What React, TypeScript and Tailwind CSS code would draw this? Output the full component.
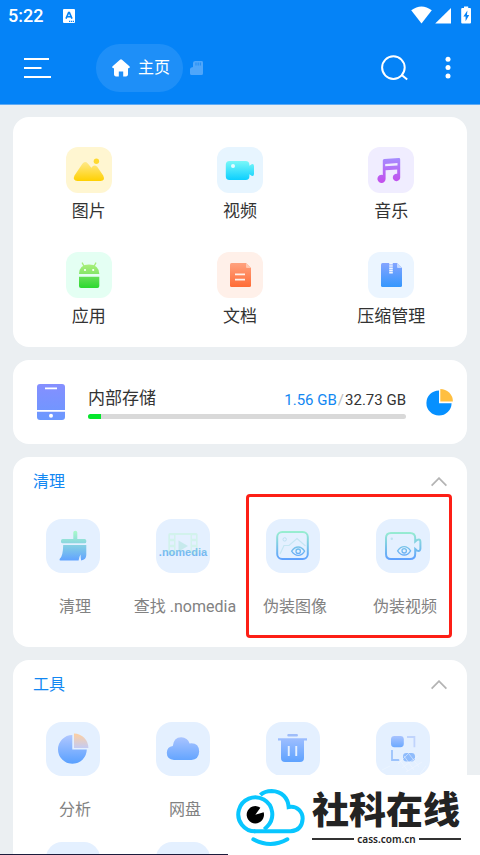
import type { ReactNode } from 'react';

const mediaItems = [
  { name: '图片', bg: 'bg-[#fff6d1]', icon: <PictureIcon /> },
  { name: '视频', bg: 'bg-[#e7f5ff]', icon: <VideoIcon /> },
  { name: '音乐', bg: 'bg-[#f0edff]', icon: <MusicIcon /> },
  { name: '应用', bg: 'bg-[#e4fff3]', icon: <AndroidIcon /> },
  { name: '文档', bg: 'bg-[#fff0e9]', icon: <DocumentIcon /> },
  { name: '压缩管理', bg: 'bg-[#ebf5ff]', icon: <ZipIcon /> },
];

const cleanItems = [
  { name: '清理', icon: <BrushIcon /> },
  { name: '查找 .nomedia', icon: <NomediaIcon /> },
  { name: '伪装图像', icon: <HiddenImageIcon /> },
  { name: '伪装视频', icon: <HiddenVideoIcon /> },
];

const toolItems = [
  { name: '分析', icon: <AnalyzeIcon /> },
  { name: '网盘', icon: <CloudIcon /> },
  { name: '', icon: <TrashIcon /> },
  { name: '', icon: <QrIcon /> },
  { name: '', icon: null },
  { name: '', icon: null },
];

function Gradient({ id, from, to }: { id: string; from: string; to: string }) {
  return (
    <defs>
      <linearGradient id={id} x1="0" y1="0" x2="0" y2="1">
        <stop offset="0" stopColor={from} />
        <stop offset="1" stopColor={to} />
      </linearGradient>
    </defs>
  );
}

// Strokes share one vertical gradient over the whole 54px tile
function TileGradient({ id, from, to }: { id: string; from: string; to: string }) {
  return (
    <defs>
      <linearGradient id={id} gradientUnits="userSpaceOnUse" x1="0" y1="12" x2="0" y2="41">
        <stop offset="0" stopColor={from} />
        <stop offset="1" stopColor={to} />
      </linearGradient>
    </defs>
  );
}

function PictureIcon() {
  return (
    <svg viewBox="0 0 46 46" className="size-full">
      <Gradient id="pic" from="#ffe98a" to="#ffd000" />
      <circle cx="30.4" cy="14.3" r="2.7" fill="#ffd92e" />
      <path d="M8.5 28.6 16.4 16.7Q18.9 13.3 21.8 16.4L25.4 20.7Q28 16.9 31.2 19.8L37.2 28.6Q39.6 34 34.6 34H11.4Q6.2 33.6 8.5 28.6Z" fill="url(#pic)" />
    </svg>
  );
}

function VideoIcon() {
  return (
    <svg viewBox="0 0 46 46" className="size-full">
      <Gradient id="vid" from="#7af8f8" to="#0ccfff" />
      <path d="M12.4 14H28.6Q32.4 14 32.4 17.8V18.8L34.6 17.2Q37 16.6 37 19V27Q37 29.4 34.6 28.8L32.4 27.2V29.2Q32.4 33 28.6 33H12.4Q8.8 33 8.8 29.2V17.8Q8.8 14 12.4 14Z" fill="url(#vid)" />
      <circle cx="16" cy="19" r="2" fill="#e7fcff" />
    </svg>
  );
}

function MusicIcon() {
  return (
    <svg viewBox="0 0 46 46" className="size-full">
      <Gradient id="mus" from="#a58dff" to="#c44dec" />
      <path fillRule="evenodd" d="M14.8 13.6Q14.8 12.2 16.3 12.1L30.8 11.1Q32.2 11 32.2 12.4V30.4A3.7 3.7 0 1 1 29.2 26.8V22.5L17.6 23.2V31.5A4.1 4.1 0 1 1 14.8 27.9ZM17.2 16.9V19.2L29.5 18.4V16.1Z" fill="url(#mus)" />
    </svg>
  );
}

function AndroidIcon() {
  return (
    <svg viewBox="0 0 46 46" className="size-full">
      <Gradient id="and" from="#66df57" to="#2bd92f" />
      <Gradient id="andHead" from="#a9ef7b" to="#85e668" />
      <path d="M16.3 11 18.4 15M29.8 11 27.7 15" stroke="#a6ee79" strokeWidth="1.4" strokeLinecap="round" />
      <path d="M13 22Q13 12.4 23 12.4T33.3 22Z" fill="url(#andHead)" />
      <path d="M13 24.7H33.3V34Q33.3 36 31.3 36H15Q13 36 13 34Z" fill="url(#and)" />
      <circle cx="19" cy="18" r="1.1" fill="#fff" />
      <circle cx="27.2" cy="18" r="1.1" fill="#fff" />
    </svg>
  );
}

function DocumentIcon() {
  return (
    <svg viewBox="0 0 46 46" className="size-full">
      <Gradient id="doc" from="#ffa27f" to="#ff6c36" />
      <path d="M14.5 11H29L34 16V33.5Q34 35 32.5 35H14.5Q13 35 13 33.5V12.5Q13 11 14.5 11Z" fill="url(#doc)" />
      <path d="M29 11 34 16H30Q29 16 29 15Z" fill="#ffc7b0" />
      <path d="M18 22.4H28M18 27.6H28" stroke="#fff0e9" strokeWidth="1.6" />
    </svg>
  );
}

function ZipIcon() {
  return (
    <svg viewBox="0 0 46 46" className="size-full">
      <Gradient id="zip" from="#84a4ff" to="#3597fd" />
      <path d="M14.5 11H29L34 16V33.5Q34 35 32.5 35H14.5Q13 35 13 33.5V12.5Q13 11 14.5 11Z" fill="url(#zip)" />
      <path d="M29 11 34 16H30Q29 16 29 15Z" fill="#c2d7ff" />
      <path d="M22.2 11V22M23.8 11V22" stroke="#f1f6ff" strokeWidth="2" strokeDasharray="1.6 .6" />
    </svg>
  );
}

function BrushIcon() {
  return (
    <svg viewBox="0 0 54 54" className="size-full">
      <TileGradient id="brush" from="#a8fac8" to="#62a4ff" />
      <path d="M27.3 13.4Q27.3 11.7 29.3 11.7T31.3 13.4V20H38.6Q40.3 20 40.3 21.7V22.8Q40.3 24.3 38.6 24.3H16.7Q15 24.3 15 22.8V21.7Q15 20 16.7 20H27.3Z" fill="url(#brush)" />
      <path d="M17.2 26H40.3V36Q40.3 40.6 35.2 41.6Q34.6 39.6 34.6 35.5Q33.4 37 32.6 41.6H14.5Q13.2 41.5 13.6 40Q17 37.7 17.2 26Z" fill="url(#brush)" />
    </svg>
  );
}

function NomediaIcon() {
  return (
    <svg viewBox="0 0 54 54" className="size-full">
      <TileGradient id="nomedia" from="#a6f5cd" to="#6aa9fa" />
      <g opacity=".8">
        <path fillRule="evenodd" d="M14 14H40Q41.6 14 41.6 15.6V36H12.3V15.6Q12.3 14 14 14ZM19.5 16V36H34.5V16Z" fill="#cef3e8" />
        <path d="M14 18H18M14 24H18M14 30H18M36 18H40M36 24H40M36 30H40" stroke="#e4f0ff" strokeWidth="3.4" />
        <path d="M22.5 21.5 32 27 22.5 32.5Z" fill="#bfe8e8" />
      </g>
      <text x="27" y="37" textAnchor="middle" fontFamily="Liberation Sans, sans-serif" fontSize="11" fontWeight="700" fill="url(#nomedia)">.nomedia</text>
    </svg>
  );
}

function HiddenImageIcon() {
  return (
    <svg viewBox="0 0 54 54" className="size-full" fill="none">
      <TileGradient id="hideImg" from="#9af0cf" to="#5e9fff" />
      <circle cx="18.7" cy="20.4" r="1.7" stroke="#bfe0f3" strokeWidth="1" />
      <path d="M14 35 18 26.5H23L31 19.5 39.5 27" stroke="#c5e6f3" strokeWidth="1.2" />
      <rect x="11.2" y="13" width="30.6" height="27" rx="5" stroke="url(#hideImg)" strokeWidth="2" />
      <path d="M25.6 32.2Q28.4 28 32.2 28T38.6 32.2Q36 36.4 32.2 36.4T25.6 32.2Z" fill="#e4f0ff" stroke="url(#hideImg)" strokeWidth="1.3" />
      <circle cx="32.2" cy="32.2" r="2.2" stroke="url(#hideImg)" strokeWidth="1.3" />
    </svg>
  );
}

function HiddenVideoIcon() {
  return (
    <svg viewBox="0 0 54 54" className="size-full" fill="none">
      <TileGradient id="hideVid" from="#9af0cf" to="#5e9fff" />
      <circle cx="15.8" cy="19.8" r="1.2" fill="#bfe3f0" />
      <path d="M15 14H34Q39.2 14 39.2 19V22.5L41 21Q44.4 19.6 44.4 22.8V29.6Q44.4 32.8 41 31.6L39.2 30V35Q39.2 40 34 40H15Q10 40 10 35V19Q10 14 15 14Z" stroke="url(#hideVid)" strokeWidth="2" />
      <path d="M21.6 31.8Q24.4 27.6 28.2 27.6T34.6 31.8Q32 36 28.2 36T21.6 31.8Z" stroke="url(#hideVid)" strokeWidth="1.3" />
      <circle cx="28.2" cy="31.8" r="2.2" stroke="url(#hideVid)" strokeWidth="1.3" />
    </svg>
  );
}

function AnalyzeIcon() {
  return (
    <svg viewBox="0 0 54 54" className="size-full">
      <TileGradient id="pie" from="#b3c8ff" to="#5ba1ff" />
      <Gradient id="pieTop" from="#ffcf9f" to="#c4cbf3" />
      <path d="M26.3 13A14.4 14.4 0 1 0 40.8 27.6H26.3Z" fill="url(#pie)" />
      <path d="M28 11.4A14.6 14.6 0 0 1 42.4 26H28Z" fill="url(#pieTop)" />
    </svg>
  );
}

function CloudIcon() {
  return (
    <svg viewBox="0 0 54 54" className="size-full">
      <TileGradient id="cloud" from="#b3c8ff" to="#5ba1ff" />
      <path d="M18 38Q10.8 37.4 10.8 30.8Q11 24.6 16.8 24Q17.6 15.4 25.2 15.2Q31.6 15.4 33.6 21.4Q43 20.4 43.2 29.6Q42.8 37.6 35.4 38Z" fill="url(#cloud)" />
    </svg>
  );
}

function TrashIcon() {
  return (
    <svg viewBox="0 0 54 54" className="size-full">
      <TileGradient id="trash" from="#a9c3ff" to="#5ba1ff" />
      <rect x="21.3" y="12" width="10.6" height="2.4" rx="1" fill="#9fbdfa" />
      <path d="M12 16.2H41V18.4H38V36Q38 40 34 40H19Q15 40 15 36V18.4H12ZM21.8 24V34H23.7V24ZM29.3 24V34H31.2V24Z" fillRule="evenodd" fill="url(#trash)" />
    </svg>
  );
}

function QrIcon() {
  return (
    <svg viewBox="0 0 54 54" className="size-full" fill="none">
      <Gradient id="qrBlock" from="#a8c3ff" to="#6ca9ff" />
      <rect x="15" y="14" width="12.8" height="11.2" rx="3.4" fill="url(#qrBlock)" />
      <path d="M31 15H38.4V25.2" stroke="#c0d4fc" strokeWidth="1.8" />
      <path d="M16 28V38H23.4" stroke="#9cc3fc" strokeWidth="1.8" />
      <rect x="27" y="31" width="12" height="8.4" rx="3.4" fill="#8fbcfc" />
      <g stroke="#f3f8ff" strokeWidth="1" opacity=".5">
        <path d="M22 42 34 30M26 46 42 34M30 50 46 40M28 34 38 48M33 32 43 45M6 48 14 44M44 52 50 44M23 37 32 49" />
      </g>
    </svg>
  );
}

function StatusBar() {
  return (
    <div className="flex h-8 items-center px-2 text-white">
      <span className="text-lg font-medium">5:22</span>
      <svg viewBox="0 0 12 14" className="ml-5 h-[14px] w-3">
        <rect width="12" height="14" rx="1" fill="currentColor" />
        <path d="M3 9.6 5.6 3.6H6.4L9 9.6M4.1 7.8H7.9" fill="none" stroke="#0583f7" strokeWidth="1.6" />
        <path d="M6 12.3H11" stroke="#0583f7" strokeWidth="1.2" strokeDasharray="1.2 .7" />
      </svg>
      <svg viewBox="0 0 62 20" className="ml-auto h-5 w-[62px]" fill="currentColor">
        <path d="M1.2 4.2Q11.5 -3.4 21.8 4.2L11.5 17.5Z" />
        <path d="M41 2V17.6H25.2Z" />
        <path fillRule="evenodd" d="M54 .4H58.2V2H60Q61 2 61 3V16.6Q61 17.6 60 17.6H52.2Q51.2 17.6 51.2 16.6V3Q51.2 2 52.2 2H54ZM57.4 4.4 53.4 10.6H55.6V15.2L59.2 9H57Z" />
      </svg>
    </div>
  );
}

function Header() {
  return (
    <header className="border-b border-[#5fabf5] bg-[#0583f7]">
      <StatusBar />
      <div className="flex h-[72px] items-center pl-6 pr-5 text-white">
        <button aria-label="menu">
          <svg viewBox="0 0 27 22" className="h-[22px] w-[27px]" stroke="currentColor" strokeWidth="2">
            <path d="M0 2H25M0 11H17.5M0 20H27" />
          </svg>
        </button>
        <button className="ml-[45px] flex h-12 items-center gap-2 rounded-full bg-white/10 pl-4 pr-3">
          <svg viewBox="0 0 18 18" className="size-[18px]" fill="currentColor">
            <path d="M8 .7Q9 0 10 .7L17.4 7.2Q18.6 9 16.6 9.2H16V15.6Q16 17.4 14.2 17.4H11.2V12.4H6.8V17.4H3.8Q2 17.4 2 15.6V9.2H1.4Q-.6 9 .6 7.2Z" />
          </svg>
          <span className="w-[33px] text-left text-base">主页</span>
        </button>
        <button aria-label="sd" className="ml-[7px]">
          <svg viewBox="0 0 14 14" className="size-[14px]">
            <path d="M5.4 0H11.6Q13 0 13 1.4V12.4Q13 14 11.4 14H1.6Q0 14 0 12.4V8Q0 6.4 3 6V2Q3 0 5.4 0Z" fill="#4fa6fa" />
            <path d="M6 1.6V4.6M8.2 1.6V4.6M10.4 1.6V4.6" stroke="#2590f5" strokeWidth="1.2" />
          </svg>
        </button>
        <button aria-label="search" className="ml-auto">
          <svg viewBox="0 0 28 26" className="h-[26px] w-7" fill="none" stroke="currentColor" strokeWidth="2">
            <circle cx="13.4" cy="12.6" r="11.3" />
            <path d="M21.4 19.8 27.2 24.6" />
          </svg>
        </button>
        <button aria-label="more" className="ml-7">
          <svg viewBox="0 0 24 24" className="size-6" fill="currentColor">
            <circle cx="12" cy="3.2" r="2.5" />
            <circle cx="12" cy="11.6" r="2.5" />
            <circle cx="12" cy="20" r="2.5" />
          </svg>
        </button>
      </div>
    </header>
  );
}

function StorageCard() {
  return (
    <section className="flex h-[84px] items-center rounded-2xl bg-white pl-6 pr-[13px]">
      <svg viewBox="0 0 28 36" className="h-9 w-7">
        <Gradient id="phone" from="#858fff" to="#6b98ff" />
        <rect width="28" height="36" rx="3" fill="url(#phone)" />
        <path d="M8 4.3H20M0 26.9H28" stroke="#fff" strokeWidth="1.8" />
        <circle cx="14" cy="31.8" r="2" fill="#fff" />
      </svg>
      <div className="ml-[23px] flex-1">
        <div className="flex h-7 items-center">
          <span className="flex-1 text-[17px] text-[#333]">内部存储</span>
          <span className="flex gap-px pt-[2px] text-[15px] text-[#333]">
            <span className="text-[#1287f2]">1.56 GB</span>
            <span className="text-[#bbb]">/</span>
            <span>32.73 GB</span>
          </span>
        </div>
        <div role="progressbar" aria-label="内部存储" aria-valuenow={4} className="mt-px h-[5px] overflow-hidden rounded-full bg-[#d9d9d9]">
          <div className="h-full w-[4%] bg-[#05e72c]" />
        </div>
      </div>
      <svg viewBox="0 0 28 28" className="ml-5 size-7">
        <path d="M13 2.4A12.6 12.6 0 1 0 25.6 15.2H13Z" fill="#0690ff" />
        <path d="M14.3 1A12.6 12.6 0 0 1 26.9 13.4H14.3Z" fill="#ffbf40" />
      </svg>
    </section>
  );
}

type Item = { name: string; icon: ReactNode };

function ToolSection({ title, items, children }: { title: string; items: Item[]; children?: ReactNode }) {
  return (
    <section className="relative rounded-2xl bg-white px-[7px] pb-7 pt-[13px]">
      <button className="flex h-6 w-full items-center justify-between px-[13px]">
        <span className="text-base text-[#1287f2]">{title}</span>
        <svg viewBox="0 0 16 10" className="h-[10px] w-4" fill="none" stroke="#b4b4b4" strokeWidth="1.8">
          <path d="M.6 8.6 8 1.2 15.4 8.6" />
        </svg>
      </button>
      <div className="mt-[25px] grid grid-cols-4 gap-y-5">
        {items.map((item, index) => (
          <button key={index} className="flex flex-col items-center">
            <span className="mr-1 size-[54px] overflow-hidden rounded-2xl bg-[#e4f0ff]">{item.icon}</span>
            <span className="mt-[22px] h-6 whitespace-nowrap text-base text-[#828282]">{item.name}</span>
          </button>
        ))}
      </div>
      {children}
    </section>
  );
}

function Watermark() {
  return (
    <div className="absolute bottom-0 right-0 flex h-20 w-[252px] items-center gap-[6px] bg-white pl-2">
      <svg viewBox="136 68 210 180" className="mb-[7px] h-[60px] w-[70px] shrink-0 self-end" fill="none" stroke="#08c6ff" strokeWidth="12">
        <path d="M209 89Q222 77 243 77C274 78 292 98 294 125C320 120 336 140 336 160Q334 196 300 198H190" />
        <path d="M194 198A51 51 0 1 1 230 183L221 192" />
        <path d="M194 148 209 127A26 26 0 1 0 219 141Z" fill="#000" stroke="none" />
        <path d="M188 222Q240 250 290 222" strokeLinecap="round" />
      </svg>
      <div className="w-[149px] text-[#232323]">
        <div className="whitespace-nowrap pt-[10px] font-['Liberation_Serif','Noto_Sans_CJK_SC',serif] text-[37px] font-black leading-[38px]">社科在线</div>
        <div className="flex items-center gap-[3px] font-['Noto_Sans',sans-serif] text-[10px] font-semibold leading-4">
          <span className="h-[2px] flex-1 bg-[#333]" />
          cass.com.cn
          <span className="h-[2px] flex-1 bg-[#333]" />
        </div>
      </div>
    </div>
  );
}

export default function App() {
  return (
    <div className="relative h-screen overflow-hidden bg-[#ebeff2] font-['Roboto','Noto_Sans_CJK_SC',sans-serif]">
      <Header />
      <main className="flex flex-col gap-[13px] px-[13px] pt-3">
        <section className="grid grid-cols-3 gap-y-[29px] rounded-2xl bg-white pb-[19px] pt-[30px]">
          {mediaItems.map((item) => (
            <button key={item.name} className="flex flex-col items-center gap-[6px]">
              <span className={`size-[46px] rounded-xl ${item.bg}`}>{item.icon}</span>
              <span className="text-[17px] leading-6 text-[#333]">{item.name}</span>
            </button>
          ))}
        </section>
        <StorageCard />
        <ToolSection title="清理" items={cleanItems}>
          {/* Highlight around the two disguise tools */}
          <div className="pointer-events-none absolute right-[15px] top-[37px] h-[144px] w-[206px] rounded-sm border-3 border-[#fd1f16]" />
        </ToolSection>
        <ToolSection title="工具" items={toolItems} />
      </main>
      <div className="absolute bottom-0 left-0 right-[252px] h-px bg-[#1c1c3c]" />
      <Watermark />
    </div>
  );
}
